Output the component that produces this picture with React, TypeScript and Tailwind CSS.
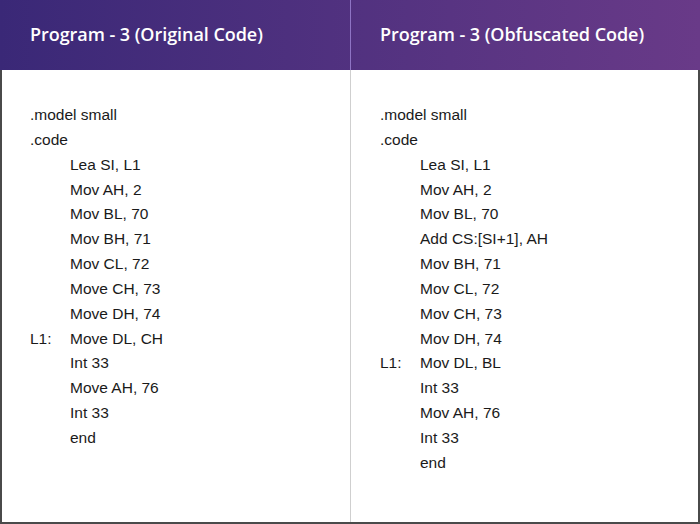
import React from "react";

type Line = { label?: string; text: string; indent?: boolean };

const left: Line[] = [
  { text: ".model small" },
  { text: ".code" },
  { text: "Lea SI, L1", indent: true },
  { text: "Mov AH, 2", indent: true },
  { text: "Mov BL, 70", indent: true },
  { text: "Mov BH, 71", indent: true },
  { text: "Mov CL, 72", indent: true },
  { text: "Move CH, 73", indent: true },
  { text: "Move DH, 74", indent: true },
  { label: "L1:", text: "Move DL, CH", indent: true },
  { text: "Int 33", indent: true },
  { text: "Move AH, 76", indent: true },
  { text: "Int 33", indent: true },
  { text: "end", indent: true },
];

const right: Line[] = [
  { text: ".model small" },
  { text: ".code" },
  { text: "Lea SI, L1", indent: true },
  { text: "Mov AH, 2", indent: true },
  { text: "Mov BL, 70", indent: true },
  { text: "Add CS:[SI+1], AH", indent: true },
  { text: "Mov BH, 71", indent: true },
  { text: "Mov CL, 72", indent: true },
  { text: "Mov CH, 73", indent: true },
  { text: "Mov DH, 74", indent: true },
  { label: "L1:", text: "Mov DL, BL", indent: true },
  { text: "Int 33", indent: true },
  { text: "Mov AH, 76", indent: true },
  { text: "Int 33", indent: true },
  { text: "end", indent: true },
];

function Code({ lines, pl }: { lines: Line[]; pl: string }) {
  return (
    <div className={`flex flex-col pt-[33px] text-[15.5px] leading-[24.85px] text-[#1a1a1a] ${pl}`}>
      {lines.map((l, i) =>
        l.indent ? (
          <div key={i} className="flex">
            <span className="w-[40px] shrink-0">{l.label ?? ""}</span>
            <span>{l.text}</span>
          </div>
        ) : (
          <div key={i}>{l.text}</div>
        )
      )}
    </div>
  );
}

export default function App() {
  return (
    <div
      className="w-[700px] h-[524px] flex flex-col bg-white"
      style={{ fontFamily: '"Liberation Sans", Arial, sans-serif' }}
    >
      <div className="h-[70px] flex bg-gradient-to-r from-[#3a2877] to-[#693a88]">
        <div className="w-[351px] flex items-center pl-[30px] pb-[1px] border-r border-[#8e74c4]">
          <span
            className="text-white text-[18px] font-semibold tracking-[-0.05px]"
            style={{ fontFamily: '"Open Sans", sans-serif' }}
          >
            Program - 3 (Original Code)
          </span>
        </div>
        <div className="flex-1 flex items-center pl-[29px] pb-[1px]">
          <span
            className="text-white text-[18px] font-semibold tracking-[-0.05px]"
            style={{ fontFamily: '"Open Sans", sans-serif' }}
          >
            Program - 3 (Obfuscated Code)
          </span>
        </div>
      </div>
      <div className="flex-1 flex border-x-2 border-b-2 border-[#4a4a4a]">
        <div className="w-[349px] border-r border-[#cfcfcf]">
          <Code lines={left} pl="pl-[28px]" />
        </div>
        <div className="flex-1">
          <Code lines={right} pl="pl-[29px]" />
        </div>
      </div>
    </div>
  );
}
